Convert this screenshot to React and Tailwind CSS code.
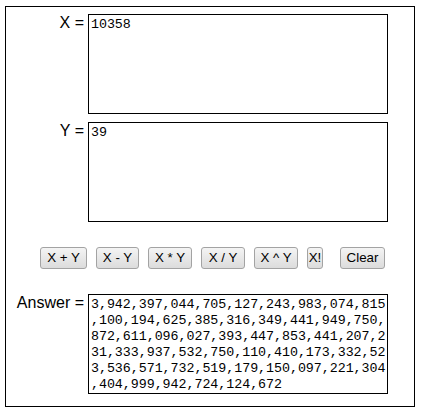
import React from 'react';

const answerLines = [
  '3,942,397,044,705,127,243,983,074,815',
  ',100,194,625,385,316,349,441,949,750,',
  '872,611,096,027,393,447,853,441,207,2',
  '31,333,937,532,750,110,410,173,332,52',
  '3,536,571,732,519,179,150,097,221,304',
  ',404,999,942,724,124,672',
];

const buttons = [
  { label: 'X + Y', w: 'w-[47px]' },
  { label: 'X - Y', w: 'w-[43px]' },
  { label: 'X * Y', w: 'w-[44px]' },
  { label: 'X / Y', w: 'w-[44px]' },
  { label: 'X ^ Y', w: 'w-[44px]' },
  { label: 'X!', w: 'w-[16px]' },
  { label: 'Clear', w: 'w-[45px] ml-[8px]' },
];

const boxClass =
  "ml-[4px] w-[300px] h-[100px] border border-black bg-white pl-[2px] pr-0 pt-[2px] pb-[2px] resize-none overflow-hidden font-['Liberation_Mono','Courier_New',monospace] text-[13.333px] leading-[16px] tracking-[-0.04px] text-black outline-none";

const Row = ({ label, value, className = '' }) => (
  <div className={`flex items-start ${className}`}>
    <div className="w-[78px] text-right text-[16px] leading-[18px] text-black">{label}</div>
    <textarea className={boxClass} defaultValue={value} wrap="off" spellCheck={false} />
  </div>
);

export default function App() {
  return (
    <div className="pl-[5px] pt-[6px] font-['Liberation_Sans',Arial,sans-serif]">
      <div className="w-[410px] border border-black bg-white pt-[7px] pb-[12px]">
        <Row label="X =" value="10358" />
        <Row label="Y =" value="39" className="mt-[8px]" />

        <div className="mt-[25px] flex gap-[9px] pl-[34px]">
          {buttons.map((b) => (
            <button
              key={b.label}
              className={`${b.w} h-[22px] flex items-center justify-center rounded-[3px] border border-[#a3a3a3] bg-linear-to-b from-[#f4f4f4] to-[#dcdcdc] text-[13.333px] leading-none text-black whitespace-pre`}
            >
              {b.label}
            </button>
          ))}
        </div>

        <Row label="Answer =" value={answerLines.join('\n')} className="mt-[25px]" />
      </div>
    </div>
  );
}
